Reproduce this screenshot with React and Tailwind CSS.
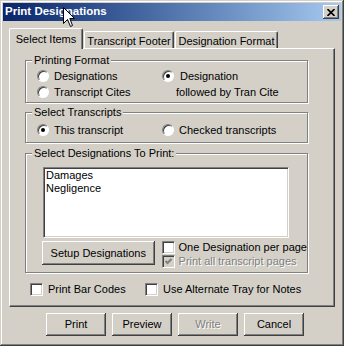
const Radio = ({ checked }) => (
  <span className="w-[12px] h-[12px] shrink-0 rounded-full bg-white border border-t-[#808080] border-l-[#808080] border-b-white border-r-white shadow-[inset_1px_1px_0_#404040] flex items-center justify-center">
    {checked && <span className="w-[4px] h-[4px] rounded-full bg-black" />}
  </span>
);

const Check = ({ checked, disabled }) => (
  <span
    className={`w-[13px] h-[13px] shrink-0 border border-t-[#808080] border-l-[#808080] border-b-white border-r-white shadow-[inset_1px_1px_0_#404040,inset_-1px_-1px_0_#d4d0c8] flex items-center justify-center ${
      disabled ? 'bg-[#d4d0c8]' : 'bg-white'
    }`}
  >
    {checked && (
      <svg width="9" height="9" viewBox="0 0 9 9">
        <path d="M1.5 4 L3.5 6 L7.5 2" fill="none" stroke="#808080" strokeWidth="2" />
      </svg>
    )}
  </span>
);

const Btn = ({ children, className = '', disabled }) => (
  <div
    className={`flex items-center justify-center whitespace-nowrap bg-[#d4d0c8] shadow-[inset_-1px_-1px_0_#404040,inset_1px_1px_0_#fff,inset_-2px_-2px_0_#808080] ${className} ${
      disabled ? 'text-[#808080] [text-shadow:1px_1px_0_#fff]' : ''
    }`}
  >
    {children}
  </div>
);

const Group = ({ title, className = '', children }) => (
  <div className={`relative ml-[15px] w-[283px] border border-[#808080] shadow-[1px_1px_0_#fff,inset_1px_1px_0_#fff] ${className}`}>
    <span className="absolute -top-[7px] left-[6px] px-[2px] bg-[#d4d0c8] leading-[13px] whitespace-nowrap">{title}</span>
    {children}
  </div>
);

export default function App() {
  return (
    <div className="relative w-[344px] h-[346px] bg-[#d4d0c8] p-[3px] text-[11px] text-black whitespace-nowrap font-['Liberation_Sans',Arial,sans-serif] shadow-[inset_-1px_-1px_0_#404040,inset_1px_1px_0_#d4d0c8,inset_-2px_-2px_0_#808080,inset_2px_2px_0_#fff]">
      {/* title bar */}
      <div className="h-[18px] flex items-center pl-[2px] pr-[2px] bg-linear-to-r from-[#0a246a] to-[#a6caf0]">
        <span className="text-white font-bold text-[11.5px]">Print Designations</span>
        <Btn className="ml-auto w-[16px] h-[14px]">
          <svg width="8" height="7" viewBox="0 0 8 7">
            <path d="M0.5 0 L7.5 7 M7.5 0 L0.5 7" stroke="#000" strokeWidth="1.6" />
          </svg>
        </Btn>
      </div>

      <div className="px-[6px] pt-[7px]">
        {/* tabs */}
        <div className="flex items-end h-[20px]">
          <div className="relative z-10 w-[74px] h-[21px] -mb-[1px] flex items-center justify-center bg-[#d4d0c8] border-l border-t border-white border-r border-r-[#404040] rounded-t-[2px] shadow-[inset_-1px_0_0_#808080]">
            Select Items
          </div>
          <div className="ml-[1px] w-[90px] h-[17px] pt-[2px] flex items-center justify-center border-l border-t border-white border-r border-r-[#404040] rounded-t-[2px] shadow-[inset_-1px_0_0_#808080]">
            Transcript Footer
          </div>
          <div className="ml-[1px] w-[103px] h-[17px] pt-[2px] flex items-center justify-center border-l border-t border-white border-r border-r-[#404040] rounded-t-[2px] shadow-[inset_-1px_0_0_#808080]">
            Designation Format
          </div>
        </div>

        {/* panel */}
        <div className="h-[259px] pt-[11px] border border-t-white border-l-white border-r-[#404040] border-b-[#404040] shadow-[inset_-1px_-1px_0_#808080]">
          <Group title="Printing Format" className="h-[43px] pt-[7px]">
            <div className="flex pl-[11px]">
              <div className="w-[125px]">
                <div className="h-[16px] flex items-center gap-[5px]">
                  <Radio />
                  <span>Designations</span>
                </div>
                <div className="h-[16px] flex items-center gap-[5px]">
                  <Radio />
                  <span>Transcript Cites</span>
                </div>
              </div>
              <div className="flex gap-[2px]">
                <div className="h-[16px] flex items-center">
                  <Radio checked />
                </div>
                <div>
                  <div className="h-[16px] leading-[16px] pl-[4px]">Designation</div>
                  <div className="h-[16px] leading-[16px]">followed by Tran Cite</div>
                </div>
              </div>
            </div>
          </Group>

          <Group title="Select Transcripts" className="mt-[9px] h-[31px] pt-[9px]">
            <div className="flex pl-[11px]">
              <div className="w-[125px] h-[16px] flex items-center gap-[5px]">
                <Radio checked />
                <span>This transcript</span>
              </div>
              <div className="h-[16px] flex items-center gap-[5px]">
                <Radio />
                <span>Checked transcripts</span>
              </div>
            </div>
          </Group>

          <Group title="Select Designations To Print:" className="mt-[10px] h-[120px] pt-[13px] pl-[17px]">
            <div className="w-[246px] h-[71px] bg-white pl-[2px] leading-[13px] border border-t-[#808080] border-l-[#808080] border-b-white border-r-white shadow-[inset_1px_1px_0_#404040,inset_-1px_-1px_0_#d4d0c8] p-[1px]">
              <div>Damages</div>
              <div>Negligence</div>
            </div>
            <div className="flex mt-[3px] -ml-[1px]">
              <Btn className="w-[114px] h-[24px]">Setup Designations</Btn>
              <div className="ml-[7px] -mt-[1px]">
                <div className="h-[14px] flex items-center gap-[4px]">
                  <Check />
                  <span>One Designation per page</span>
                </div>
                <div className="h-[14px] flex items-center gap-[4px] text-[#808080] [text-shadow:1px_1px_0_#fff]">
                  <Check checked disabled />
                  <span>Print all transcript pages</span>
                </div>
              </div>
            </div>
          </Group>

          <div className="flex mt-[10px] ml-[20px] h-[13px]">
            <div className="w-[115px] flex items-center gap-[5px]">
              <Check />
              <span>Print Bar Codes</span>
            </div>
            <div className="flex items-center gap-[5px]">
              <Check />
              <span>Use Alternate Tray for Notes</span>
            </div>
          </div>
        </div>
      </div>

      {/* buttons */}
      <div className="flex gap-[6px] pl-[43px] mt-[6px]">
        <Btn className="w-[60px] h-[23px]">Print</Btn>
        <Btn className="w-[60px] h-[23px]">Preview</Btn>
        <Btn className="w-[60px] h-[23px]" disabled>Write</Btn>
        <Btn className="w-[60px] h-[23px]">Cancel</Btn>
      </div>

      {/* mouse pointer */}
      <svg className="absolute left-[63px] top-[7px]" width="13" height="21" viewBox="0 0 13 21">
        <path d="M0.5 0.5 L0.5 16.5 L4.5 12.5 L7.5 19.5 L9.5 18.5 L6.8 11.5 L11.5 11.5 Z" fill="#fff" stroke="#000" strokeWidth="1" />
      </svg>
    </div>
  );
}
